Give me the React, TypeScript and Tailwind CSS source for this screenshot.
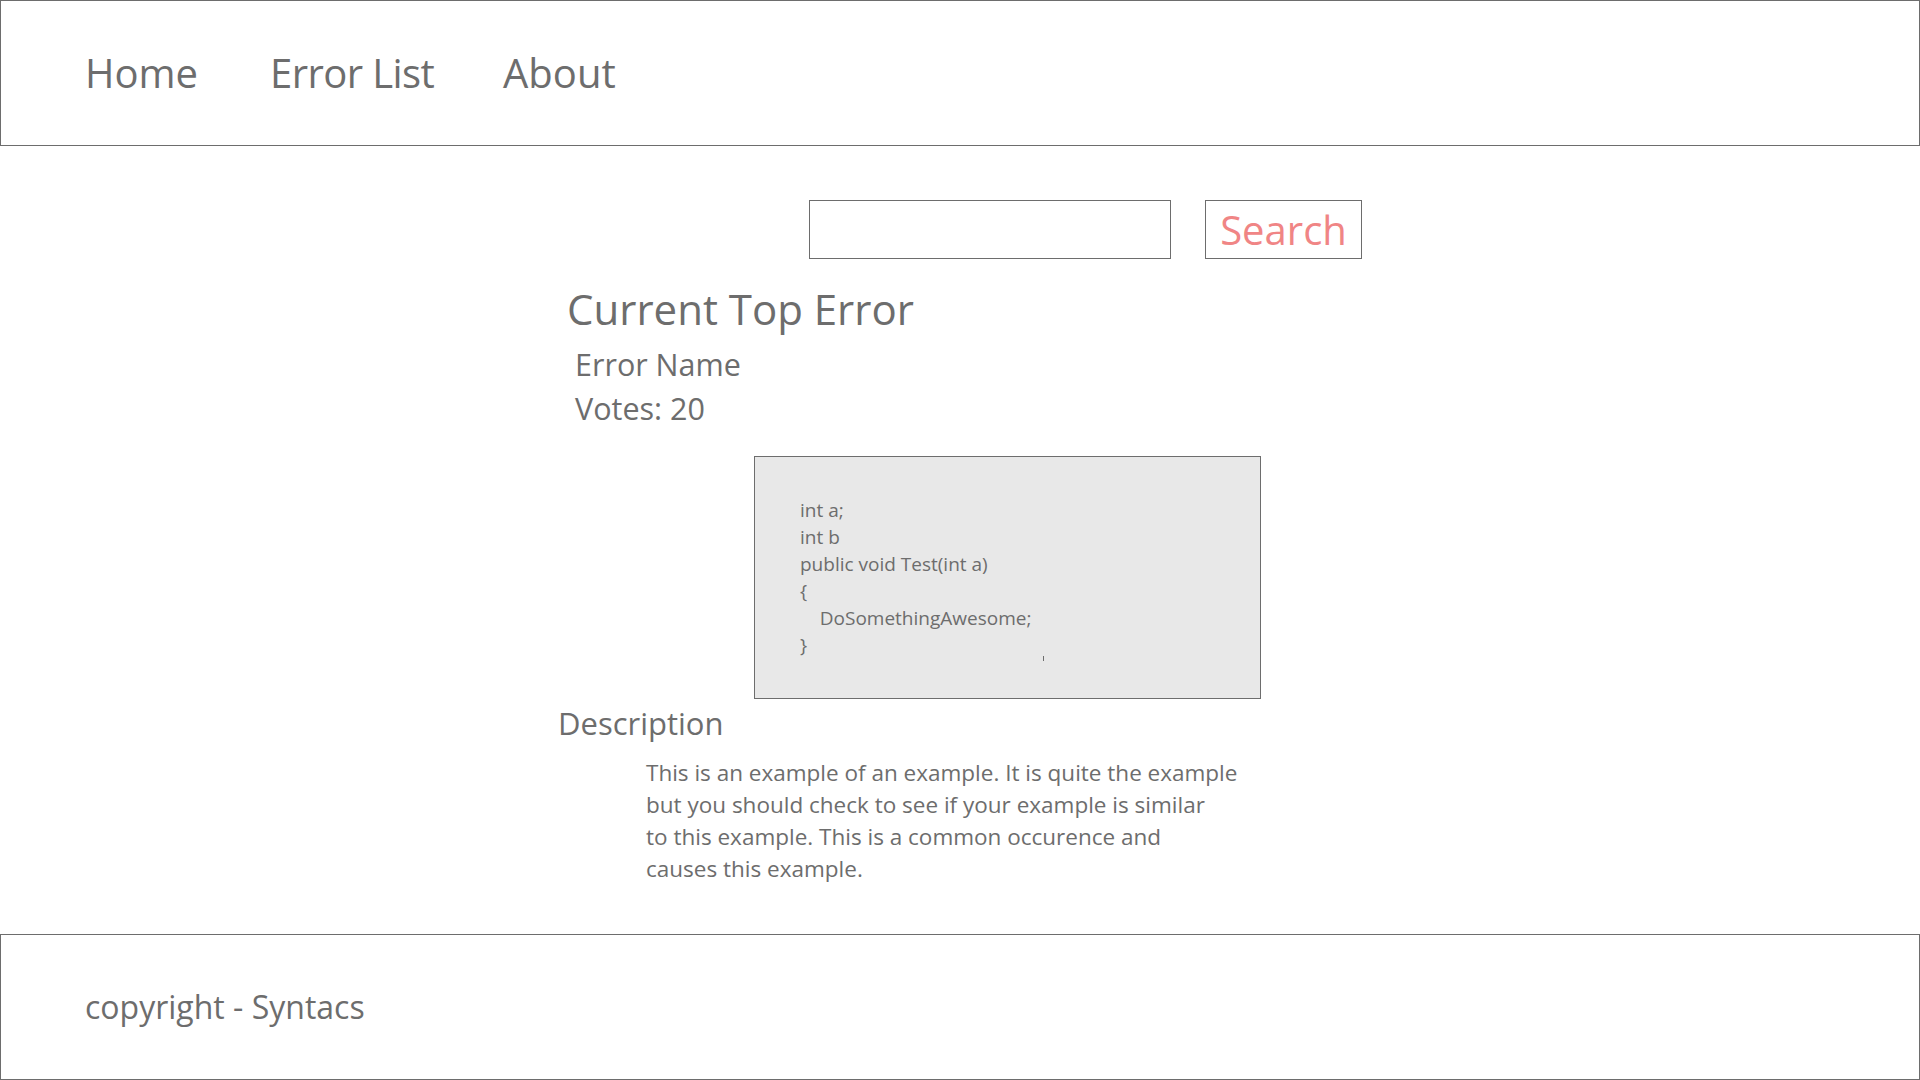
export default function App() {
  const code = [
    'int a;',
    'int b',
    'public void Test(int a)',
    '{',
    '    DoSomethingAwesome;',
    '}',
  ];

  return (
    <div className="flex min-h-screen flex-col bg-white text-[#6d6d6d] font-['Open_Sans',sans-serif]">
      {/* header nav */}
      <header className="flex h-[146px] items-center border border-[#6d6d6d] pl-[84px]">
        <nav className="flex items-center text-[40px] leading-none">
          <a className="mr-[72px]">Home</a>
          <a className="mr-[69px] tracking-[-0.6px]">Error List</a>
          <a>About</a>
        </nav>
      </header>

      <main className="flex-1">
        <div className="mx-auto w-[804px] pt-[54px]">
          <div className="flex justify-end gap-[34px]">
            <input className="h-[59px] w-[362px] border border-[#6d6d6d] outline-none" />
            <button className="h-[59px] w-[157px] border border-[#6d6d6d] text-[40px] leading-none text-[#f08585]">
              Search
            </button>
          </div>

          <h1 className="mt-[22px] pl-[9px] text-[42px] leading-[56px]">Current Top Error</h1>
          <div className="mt-[5px] pl-[17px] text-[30.5px] leading-[44px]">
            <div>Error Name</div>
            <div>Votes: 20</div>
          </div>

          <div className="relative ml-[196px] mt-[26px] h-[243px] w-[507px] border border-[#6d6d6d] bg-[#e8e8e8] pl-[45px] pt-[40px]">
            <pre className="font-['Open_Sans',sans-serif] text-[19px] leading-[27px]">
              {code.join('\n')}
            </pre>
            <span className="absolute left-[288px] top-[199px] h-[5px] w-px bg-[#6d6d6d]" />
          </div>

          <h2 className="mt-[2px] text-[31px] leading-[44px]">Description</h2>
          <p className="mt-[12px] pl-[88px] text-[22.5px] leading-[32px]">
            This is an example of an example. It is quite the example
            <br />
            but you should check to see if your example is similar
            <br />
            to this example. This is a common occurence and
            <br />
            causes this example.
          </p>
        </div>
      </main>

      <footer className="flex h-[146px] items-center border border-[#6d6d6d] pl-[84px]">
        <span className="text-[32px] leading-none">copyright - Syntacs</span>
      </footer>
    </div>
  );
}
